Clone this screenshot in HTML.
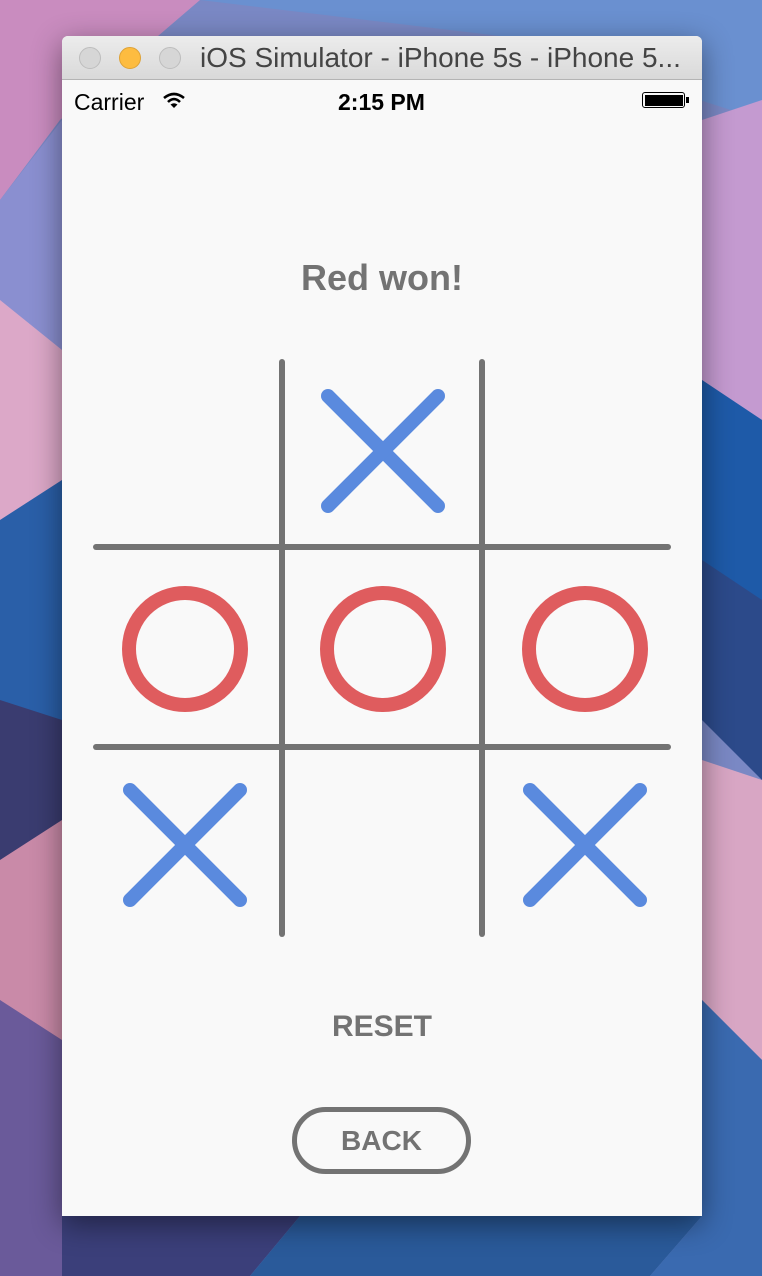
<!DOCTYPE html>
<html><head><meta charset="utf-8"><style>
html,body{margin:0;padding:0;width:762px;height:1276px;overflow:hidden;font-family:"Liberation Sans",sans-serif}
.bg{position:absolute;left:0;top:0}
.win{position:absolute;left:62px;top:36px;width:640px;height:1180px;background:#f9f9f9;border-radius:6px 6px 0 0;overflow:hidden;box-shadow:0 8px 30px rgba(0,0,0,.45)}
.title{height:43px;background:linear-gradient(#ececec,#d9d9d9);border-bottom:1px solid #b4b4b4;position:relative}
.dot{position:absolute;top:11px;width:22px;height:22px;border-radius:50%;background:#d6d6d6;border:1px solid #bdbdbd;box-sizing:border-box}
.ttl{position:absolute;left:138px;top:6px;font-size:28px;color:#444;white-space:nowrap}
.sb{position:absolute;top:44px;left:0;width:640px;height:40px;font-size:23px;color:#000}
</style></head><body>
<svg class="bg" width="762" height="1276" viewBox="0 0 762 1276">
<rect width="762" height="1276" fill="#7a88c4"/>
<polygon points="0,0 200,0 60,120 0,200" fill="#c98cbf"/>
<polygon points="0,200 62,120 62,420 0,500" fill="#8a8fd0"/>
<polygon points="0,300 62,350 62,520 0,560" fill="#dca8c8"/>
<polygon points="0,520 62,480 62,760 0,720" fill="#2a5fa8"/>
<polygon points="0,700 62,720 62,900 0,880" fill="#3a3c70"/>
<polygon points="0,860 62,820 62,1060 0,1000" fill="#c98aa8"/>
<polygon points="0,1000 62,1040 62,1276 0,1276" fill="#6a5a9a"/>
<polygon points="62,1216 300,1216 250,1276 62,1276" fill="#3b3f7a"/>
<polygon points="300,1216 702,1216 650,1276 250,1276" fill="#2a5a9a"/>
<polygon points="200,0 762,0 762,120 500,36" fill="#6a90d0"/>
<polygon points="702,120 762,100 762,420 702,380" fill="#c49ad0"/>
<polygon points="702,380 762,420 762,620 702,560" fill="#1e5aa8"/>
<polygon points="702,560 762,600 762,780 702,720" fill="#2c4a8a"/>
<polygon points="702,760 762,780 762,1060 702,1000" fill="#d8a6c4"/>
<polygon points="702,1000 762,1060 762,1276 650,1276 702,1216" fill="#3a6ab0"/>
</svg>
<div class="win">
<div class="title">
<div class="dot" style="left:17px"></div>
<div class="dot" style="left:57px;background:#fdbc40;border-color:#dea236"></div>
<div class="dot" style="left:97px"></div>
<div class="ttl">iOS Simulator - iPhone 5s - iPhone 5...</div>
</div>
<div class="sb">
<span style="position:absolute;left:12px;top:9px">Carrier</span>
<svg style="position:absolute;left:100px;top:12px" width="24" height="18" viewBox="0 0 24 18"><path d="M2 6 Q12 -2 22 6" stroke="#000" stroke-width="2.6" fill="none"/><path d="M6 10 Q12 4 18 10" stroke="#000" stroke-width="2.6" fill="none"/><path d="M12 16 L8.5 12.5 Q12 10 15.5 12.5Z" fill="#000"/></svg>
<span style="position:absolute;left:276px;top:9px;font-weight:bold">2:15 PM</span>
<div style="position:absolute;left:580px;top:12px;width:43px;height:16px;border:1.5px solid #000;border-radius:3px;box-sizing:border-box;padding:1.5px"><div style="background:#000;width:100%;height:100%"></div></div>
<div style="position:absolute;left:624px;top:17px;width:3px;height:6px;background:#000"></div>
</div>
<div style="position:absolute;left:0;width:640px;top:221px;text-align:center;font-size:36px;font-weight:bold;color:#737373">Red won!</div>
<svg style="position:absolute;left:0;top:0" width="640" height="1180" viewBox="62 36 640 1180">
<g stroke="#737373" stroke-width="6" stroke-linecap="round">
<line x1="282" y1="362" x2="282" y2="934"/><line x1="482" y1="362" x2="482" y2="934"/>
<line x1="96" y1="547" x2="668" y2="547"/><line x1="96" y1="747" x2="668" y2="747"/>
</g>
<g stroke="#5a8ade" stroke-width="14" stroke-linecap="round">
<line x1="328" y1="396" x2="438" y2="506"/><line x1="438" y1="396" x2="328" y2="506"/>
<line x1="130" y1="790" x2="240" y2="900"/><line x1="240" y1="790" x2="130" y2="900"/>
<line x1="530" y1="790" x2="640" y2="900"/><line x1="640" y1="790" x2="530" y2="900"/>
</g>
<g stroke="#df5c5e" stroke-width="14" fill="none">
<circle cx="185" cy="649" r="56"/><circle cx="383" cy="649" r="56"/><circle cx="585" cy="649" r="56"/>
</g>
</svg>
<div style="position:absolute;left:0;width:640px;top:974px;text-align:center;font-size:30px;font-weight:bold;color:#737373">RESET</div>
<div style="position:absolute;left:230px;top:1071px;width:179px;height:67px;border:5px solid #737373;border-radius:34px;box-sizing:border-box;text-align:center;line-height:57px;font-size:28px;font-weight:bold;color:#737373">BACK</div>
</div>
</body></html>
